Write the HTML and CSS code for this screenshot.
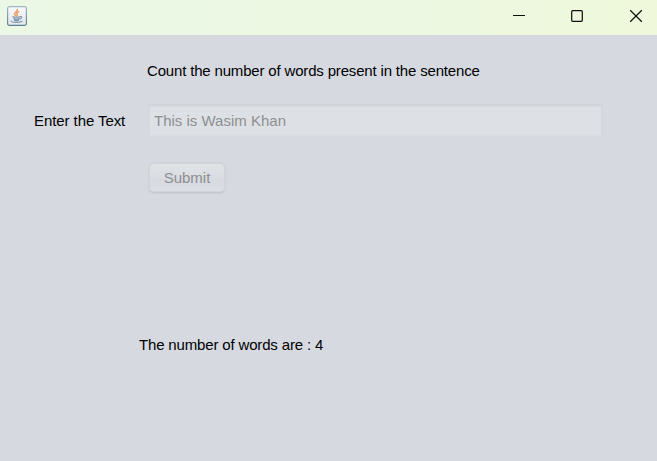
FILE: index.html
```html
<!DOCTYPE html>
<html lang="en">
<head>
<meta charset="utf-8">
<title>Word Counter</title>
<link rel="stylesheet" href="styles.css">
</head>
<body>
<div class="window">
  <header class="titlebar">
    <svg class="app-icon" width="20" height="20" viewBox="0 0 20 20">
      <defs>
        <linearGradient id="tile" x1="0" y1="0" x2="0" y2="1"><stop offset="0" stop-color="#f7f9fb"/><stop offset="1" stop-color="#e4e7eb"/></linearGradient>
        <linearGradient id="edge" x1="0" y1="0" x2="0" y2="1"><stop offset="0" stop-color="#9fb8c4"/><stop offset="1" stop-color="#607e94"/></linearGradient>
      </defs>
      <rect x=".6" y=".6" width="18.8" height="18.8" rx="1.8" fill="url(#tile)" stroke="url(#edge)" stroke-width="1.2"/>
      <g fill="none" stroke-linecap="round">
        <path d="M10.4 3.4C11 5.4 7.4 6 7.6 8C7.7 8.8 8.5 9.2 9 10M11.8 5.7C9.4 6.8 9.3 7.5 10.2 8.3C10.7 8.9 10.4 9.5 9.8 10" stroke="#ed9958" stroke-width="1.4"/>
        <path d="M6 10.7C7 11.5 11.5 11.4 13 10.7M6.8 12.5C8 13.3 11 13.3 12.2 12.5M7.3 14.1C8.5 14.7 10.5 14.7 11.7 14.1M13.1 10.6C15.5 10.2 15 12.6 13 13" stroke="#7893ad" stroke-width="1.2"/>
        <path d="M4.2 15.2C4 16.7 12.5 16.6 15 15.4" stroke="#8299ae" stroke-width="1.2"/>
      </g>
    </svg>
    <svg class="controls" width="130" height="14" viewBox="0 0 130 14" fill="none" stroke="#111" stroke-width="1.25">
      <path d="M0 6.5H12" stroke-width="1"/>
      <rect x="58.7" y="1.7" width="10.6" height="10.6" rx="1"/>
      <path d="M117.2 1.3L128.8 12.7M128.8 1.3L117.2 12.7"/>
    </svg>
  </header>
  <main class="form">
    <h1 class="heading">Count the number of words present in the sentence</h1>
    <label class="label" for="text">Enter the Text</label>
    <input class="field" id="text" type="text" value="This is Wasim Khan" disabled>
    <button class="submit" disabled>Submit</button>
    <p class="result">The number of words are : 4</p>
  </main>
</div>
</body>
</html>
```
FILE: styles.css
```css
* { box-sizing: border-box; }
body { margin: 0; background: #d6d9e0; color: #000; font: 15px/18px "Liberation Sans", Arial, sans-serif; }
.window { height: 461px; display: flex; flex-direction: column; overflow: hidden; }
.titlebar { height: 35px; flex: none; display: flex; align-items: center; justify-content: space-between; padding: 0 14px 4px 7px; background: linear-gradient(90deg, #ebf8e5 0%, #ecf8e1 65%, #eff8da 100%); }
.app-icon, .controls { display: block; }
.form { flex: 1; display: grid; grid-template-columns: 115px 455px; grid-template-rows: 18px 34px 32px auto; row-gap: 24px; padding: 27px 0 0 33px; align-content: start; align-items: center; }
.heading { grid-column: 2; margin: 0 0 0 -1px; font-size: inherit; font-weight: 400; letter-spacing: -0.17px; white-space: nowrap; }
.label { padding-left: 1px; letter-spacing: -0.08px; }
.field { align-self: start; width: 455px; height: 32px; margin: 0; padding: 1px 5px 0; border: 1px solid; border-color: #cfd2d7 #d3d6dc #d9dce2 #d5d8de; background: #dde1e5; box-shadow: inset 0 2px 1px #d3d6da, inset 1px 0 1px #d8dbe0, inset -1px 0 1px #d5d8dd; color: #8e8f91; font: inherit; }
.submit { align-self: start; grid-column: 2; width: 78px; height: 31px; margin: 0; padding: 0; border: 1px solid #cfd2d7; border-bottom-color: #c5c8ce; border-radius: 6px; background: linear-gradient(#e1e4e7, #d7dae0 60%, #dce0e7); box-shadow: inset 0 0 1px 1px #d0d3d8, 0 1px 1px #ced1d7; color: #8e8f91; font: inherit; }
.result { grid-column: 1 / -1; margin: 118px 0 0 106px; letter-spacing: -0.16px; }
```
